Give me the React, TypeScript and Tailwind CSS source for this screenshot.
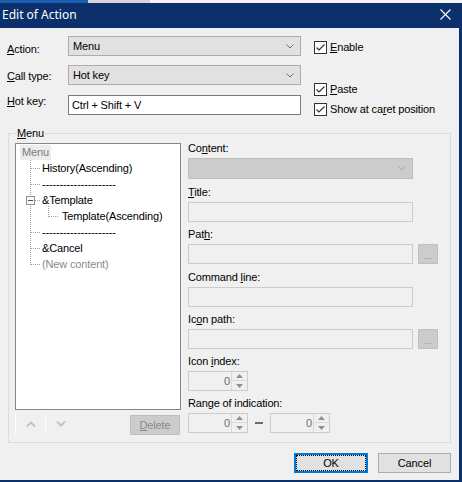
import React from "react";

const font =
  "font-['Liberation_Sans',Arial,sans-serif] text-[11px] leading-[13px] tracking-[-0.15px]";

function U({ children }: { children: React.ReactNode }) {
  return <span className="underline underline-offset-[1px] decoration-1">{children}</span>;
}

function Chevron({ color }: { color: string }) {
  return (
    <svg width="8" height="5" viewBox="0 0 8 5" className="block shrink-0">
      <polyline points="0.5,0.5 4,4 7.5,0.5" fill="none" stroke={color} strokeWidth="1" />
    </svg>
  );
}

function Check() {
  return (
    <svg width="13" height="13" viewBox="0 0 13 13" className="block shrink-0">
      <rect x="0.5" y="0.5" width="12" height="12" fill="#ffffff" stroke="#333333" />
      <polyline points="2.5,6.5 5,9 10.5,3.5" fill="none" stroke="#333333" strokeWidth="1.2" />
    </svg>
  );
}

function Combo({ text }: { text: string }) {
  return (
    <div className="h-[20px] flex items-center pl-[4px] pr-[6px] border border-[#adadad] bg-[#e1e1e1] text-black">
      <span className="flex-1">{text}</span>
      <Chevron color="#707070" />
    </div>
  );
}

function DisabledInput() {
  return <div className="h-[20px] w-[225px] border border-[#cccccc] bg-[#f0f0f0]" />;
}

function DotsButton() {
  return (
    <div className="ml-[5px] h-[20px] w-[20px] border border-[#bfbfbf] bg-[#cccccc] flex items-end justify-center text-[#8a8a8a] leading-[14px] text-[9px] tracking-[0.5px]">
      ...
    </div>
  );
}

function Spin() {
  return (
    <div className="h-[20px] w-[60px] border border-[#cccccc] bg-[#f0f0f0] flex">
      <div className="flex-1 flex items-center justify-end pr-[1px] text-[#6d6d6d]">0</div>
      <div className="w-[16px] flex flex-col border-l border-[#d9d9d9] bg-[#f0f0f0]">
        <div className="h-[9px] flex items-center justify-center border-b border-[#d9d9d9]">
          <svg width="7" height="4" viewBox="0 0 7 4" className="block">
            <polygon points="3.5,0 7,4 0,4" fill="#8f8f8f" />
          </svg>
        </div>
        <div className="flex-1 flex items-center justify-center">
          <svg width="7" height="4" viewBox="0 0 7 4" className="block">
            <polygon points="0,0 7,0 3.5,4" fill="#8f8f8f" />
          </svg>
        </div>
      </div>
    </div>
  );
}

function Field({ label, mt, children }: { label: React.ReactNode; mt: string; children: React.ReactNode }) {
  return (
    <div className={mt}>
      <div className="h-[13px] text-black">{label}</div>
      <div className="mt-[3px] flex">{children}</div>
    </div>
  );
}

function Tree() {
  const dash = "1 1";
  const hs = [24, 40, 88, 104, 120];
  return (
    <div className="relative w-[166px] h-[267px] border border-[#828790] bg-white">
      <svg
        width="164"
        height="265"
        viewBox="0 0 164 265"
        className="absolute left-0 top-0 block"
        shapeRendering="crispEdges"
      >
        <line x1="14.5" y1="16" x2="14.5" y2="121" stroke="#a0a0a0" strokeDasharray={dash} />
        {hs.map((y) => (
          <line key={y} x1="15" y1={y + 0.5} x2="25" y2={y + 0.5} stroke="#a0a0a0" strokeDasharray={dash} />
        ))}
        <line x1="19" y1="56.5" x2="25" y2="56.5" stroke="#a0a0a0" strokeDasharray={dash} />
        <line x1="32.5" y1="62" x2="32.5" y2="73" stroke="#a0a0a0" strokeDasharray={dash} />
        <line x1="33" y1="72.5" x2="43" y2="72.5" stroke="#a0a0a0" strokeDasharray={dash} />
        <rect x="10.5" y="52.5" width="8" height="8" fill="#fafafa" stroke="#919191" />
        <line x1="12" y1="56.5" x2="17" y2="56.5" stroke="#2a52a8" />
      </svg>
      <div className="relative flex flex-col">
        <div className="h-[16px] flex items-center pl-[4px]">
          <span className="h-[15px] px-[2px] bg-[#ececec] text-[#7a7a7a] flex items-center">Menu</span>
        </div>
        <div className="h-[16px] flex items-center pl-[26px] text-black">History(Ascending)</div>
        <div className="h-[16px] flex items-center pl-[26px] text-black">---------------------</div>
        <div className="h-[16px] flex items-center pl-[26px] text-black">&amp;Template</div>
        <div className="h-[16px] flex items-center pl-[46px] text-black">Template(Ascending)</div>
        <div className="h-[16px] flex items-center pl-[26px] text-black">---------------------</div>
        <div className="h-[16px] flex items-center pl-[26px] text-black">&amp;Cancel</div>
        <div className="h-[16px] flex items-center pl-[26px] text-[#8a8a8a]">(New content)</div>
      </div>
    </div>
  );
}

export default function App() {
  return (
    <div className={`w-[462px] h-[482px] overflow-hidden flex flex-col bg-[#f0f0f0] ${font}`}>
      <div className="h-[3px] flex shrink-0">
        <div className="w-[88px] bg-[#1d5fb3]" />
        <div className="w-[62px] bg-[#d6d6d6]" />
        <div className="flex-1 bg-[#f4f4f4]" />
      </div>
      <div className="flex-1 flex flex-col border-r-[3px] border-b-2 border-[#0b306b]">
        <div className="h-[25px] shrink-0 bg-[#0b306b] flex items-center pl-[2px] pr-[8px] text-white">
          <span className="flex-1 font-['Noto_Sans',sans-serif] text-[12px] leading-[16px] tracking-normal -mt-[1px]">
            Edit of Action
          </span>
          <svg width="11" height="11" viewBox="0 0 11 11" className="block mt-[-3px]">
            <path d="M0.5 0.5 L10.5 10.5 M10.5 0.5 L0.5 10.5" stroke="#ffffff" strokeWidth="1.1" fill="none" />
          </svg>
        </div>
        <div className="flex-1 flex flex-col bg-[#f0f0f0]">
          {/* top section */}
          <div className="h-[105px] shrink-0 flex">
            <div className="w-[68px] pl-[7px] flex flex-col text-black">
              <div className="mt-[15px] h-[13px]">
                <U>A</U>ction:
              </div>
              <div className="mt-[14px] h-[13px]">
                <U>C</U>all type:
              </div>
              <div className="mt-[12px] h-[13px]">
                <U>H</U>ot key:
              </div>
            </div>
            <div className="w-[233px] flex flex-col">
              <div className="mt-[8px]">
                <Combo text="Menu" />
              </div>
              <div className="mt-[9px]">
                <Combo text="Hot key" />
              </div>
              <div className="mt-[10px] h-[20px] border border-[#7a7a7a] bg-white flex items-center pl-[3px] text-black">
                Ctrl + Shift + V
              </div>
            </div>
            <div className="ml-[13px] flex flex-col text-black">
              <div className="mt-[13px] h-[13px] flex items-center gap-[3px]">
                <Check />
                <span>
                  <U>E</U>nable
                </span>
              </div>
              <div className="mt-[29px] h-[13px] flex items-center gap-[3px]">
                <Check />
                <span>
                  <U>P</U>aste
                </span>
              </div>
              <div className="mt-[7px] h-[13px] flex items-center gap-[3px]">
                <Check />
                <span>
                  Show at ca<U>r</U>et position
                </span>
              </div>
            </div>
          </div>

          {/* group box */}
          <div className="relative ml-[8px] w-[443px] h-[310px] shrink-0 border border-[#dcdcdc]">
            <div className="absolute left-[7px] top-[-7px] px-[1px] bg-[#f0f0f0] text-black">
              <U>M</U>enu
            </div>
            <div className="flex pl-[6px] pt-[8px]">
              <div className="flex flex-col mt-[1px]">
                <Tree />
                <div className="mt-[4px] h-[21px] flex">
                  <div className="w-[30px] h-[20px] border-l border-white flex items-center justify-center">
                    <svg width="10" height="6" viewBox="0 0 10 6" className="block">
                      <polyline points="1,5.5 5,1.5 9,5.5" fill="none" stroke="#c4c4c4" strokeWidth="2" />
                    </svg>
                  </div>
                  <div className="w-[30px] h-[20px] border-l border-white flex items-center justify-center">
                    <svg width="10" height="6" viewBox="0 0 10 6" className="block">
                      <polyline points="1,0.5 5,4.5 9,0.5" fill="none" stroke="#c4c4c4" strokeWidth="2" />
                    </svg>
                  </div>
                  <div className="ml-auto mr-[1px] mt-[1px] w-[50px] h-[20px] border border-[#bfbfbf] bg-[#cccccc] flex items-center justify-center text-[#8a8a8a]">
                    <span>
                      <U>D</U>elete
                    </span>
                  </div>
                </div>
              </div>
              <div className="ml-[7px] flex flex-col">
                <Field mt="mt-0" label={<>Co<U>n</U>tent:</>}>
                  <div className="h-[21px] w-[225px] flex items-center justify-end pr-[6px] border border-[#bfbfbf] bg-[#cccccc]">
                    <Chevron color="#a8a8a8" />
                  </div>
                </Field>
                <Field mt="mt-[7px]" label={<><U>T</U>itle:</>}>
                  <DisabledInput />
                </Field>
                <Field mt="mt-[6px]" label={<>Pat<U>h</U>:</>}>
                  <DisabledInput />
                  <DotsButton />
                </Field>
                <Field mt="mt-[7px]" label={<>Command <U>l</U>ine:</>}>
                  <DisabledInput />
                </Field>
                <Field mt="mt-[6px]" label={<>Ic<U>o</U>n path:</>}>
                  <DisabledInput />
                  <DotsButton />
                </Field>
                <Field mt="mt-[6px]" label={<>Icon <U>i</U>ndex:</>}>
                  <Spin />
                </Field>
                <Field mt="mt-[6px]" label={<>Range of indication:</>}>
                  <Spin />
                  <div className="ml-[7px] w-[8px] h-[2px] mt-[9px] bg-[#6d6d6d]" />
                  <div className="ml-[7px]">
                    <Spin />
                  </div>
                </Field>
              </div>
            </div>
          </div>

          {/* buttons */}
          <div className="mt-[10px] flex justify-end gap-[10px] pr-[8px]">
            <div className="relative w-[74px] h-[20px] border-2 border-[#0078d7] bg-[#e1e1e1] flex items-center justify-center text-black">
              <div className="absolute inset-0 border border-dotted border-black" />
              OK
            </div>
            <div className="w-[73px] h-[20px] border border-[#adadad] bg-[#e1e1e1] flex items-center justify-center text-black">
              Cancel
            </div>
          </div>
        </div>
      </div>
    </div>
  );
}
